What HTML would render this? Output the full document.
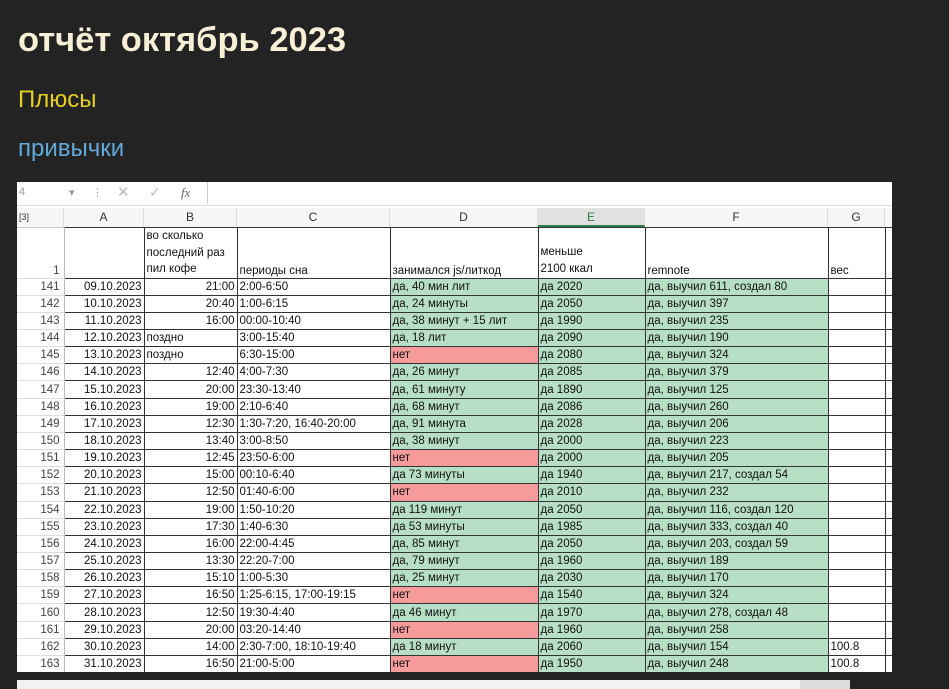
<!DOCTYPE html>
<html><head><meta charset="utf-8"><style>
body{margin:0;background:#232323;width:949px;height:689px;overflow:hidden;position:relative;font-family:"Liberation Sans","DejaVu Sans",sans-serif}
h1{position:absolute;left:18px;top:21px;margin:0;font-size:34.5px;font-weight:bold;color:#f7efd6}
.h2{position:absolute;left:18px;margin:0;font-size:24px}
#sheet{position:absolute;left:17px;top:182px;width:875px;height:490px;background:#fff;overflow:hidden}
#tb{position:absolute;left:0;top:0;width:875px;height:23px;background:#fff;border-bottom:1px solid #ddd;font-size:11px;color:#999}
#hd{position:absolute;left:0;top:26px;height:19px;width:875px;background:#f6f6f6;border-bottom:1px solid #ccc}
.ch{position:absolute;top:0;height:19px;line-height:19px;text-align:center;font-size:12px;color:#333;border-right:1px solid #ddd;box-sizing:border-box}
table{position:absolute;left:0;top:45px;width:888px;border-collapse:collapse;table-layout:fixed;font-size:11.5px;color:#111}
tr{height:17.17px}
td{border:1px solid #333;padding:0 2px;white-space:nowrap;overflow:hidden;line-height:14px}
td.n{text-align:right;color:#444;border:none;border-right:1px solid #bbb;border-bottom:1px solid #ddd;padding-right:4px}
td.r{text-align:right}
.g{background:#b7dfc5}.x{background:#f59b9b}
</style></head><body>
<h1>отчёт октябрь 2023</h1>
<div class="h2" style="top:86px;color:#e6cf22">Плюсы</div>
<div class="h2" style="top:135px;color:#62a9d9">привычки</div>
<div id="sheet">
<div id="tb"><span style="position:absolute;left:2px;top:4px">4</span><span style="position:absolute;left:52px;top:4px">▾</span><span style="position:absolute;left:75px;top:4px">⋮</span><span style="position:absolute;left:100px;top:1px;font-size:15px;color:#bbb">✕</span><span style="position:absolute;left:132px;top:2px;font-size:14px;color:#bbb">✓</span><span style="position:absolute;left:164px;top:3px;font-style:italic;color:#666;font-family:'Liberation Serif',serif;font-size:13px">fx</span><div style="position:absolute;left:190px;top:0;width:1px;height:22px;background:#ccc"></div></div>
<div id="hd">
<div class="ch" style="left:0;width:47px;text-align:left;padding-left:2px;font-size:9px">[3]</div>
<div class="ch" style="left:47px;width:80px">A</div>
<div class="ch" style="left:127px;width:93px">B</div>
<div class="ch" style="left:220px;width:153px">C</div>
<div class="ch" style="left:373px;width:148px">D</div>
<div class="ch" style="left:521px;width:107px;background:#e1e1e1;border-bottom:2px solid #2e7d4f;color:#2e7d4f">E</div>
<div class="ch" style="left:628px;width:183px">F</div>
<div class="ch" style="left:811px;width:57px">G</div>
</div>
<table>
<colgroup><col style="width:47px"><col style="width:80px"><col style="width:93px"><col style="width:153px"><col style="width:148px"><col style="width:107px"><col style="width:183px"><col style="width:57px"><col style="width:20px"></colgroup>
<tr style="height:48px"><td class="n" style="vertical-align:bottom">1</td><td></td><td style="vertical-align:bottom;line-height:16.5px;border-bottom:1px solid #333">во сколько<br>последний раз<br>пил кофе</td><td style="vertical-align:bottom">периоды сна</td><td style="vertical-align:bottom">занимался js/литкод</td><td style="vertical-align:bottom;line-height:17px">меньше<br>2100 ккал</td><td style="vertical-align:bottom">remnote</td><td style="vertical-align:bottom">вес</td><td></td></tr>
<tr><td class="n">141</td><td class="r">09.10.2023</td><td class="r">21:00</td><td>2:00-6:50</td><td class="g">да, 40 мин лит</td><td class="g">да 2020</td><td class="g">да, выучил 611, создал 80</td><td></td><td></td></tr>
<tr><td class="n">142</td><td class="r">10.10.2023</td><td class="r">20:40</td><td>1:00-6:15</td><td class="g">да, 24 минуты</td><td class="g">да 2050</td><td class="g">да, выучил 397</td><td></td><td></td></tr>
<tr><td class="n">143</td><td class="r">11.10.2023</td><td class="r">16:00</td><td>00:00-10:40</td><td class="g">да, 38 минут + 15 лит</td><td class="g">да 1990</td><td class="g">да, выучил 235</td><td></td><td></td></tr>
<tr><td class="n">144</td><td class="r">12.10.2023</td><td>поздно</td><td>3:00-15:40</td><td class="g">да, 18 лит</td><td class="g">да 2090</td><td class="g">да, выучил 190</td><td></td><td></td></tr>
<tr><td class="n">145</td><td class="r">13.10.2023</td><td>поздно</td><td>6:30-15:00</td><td class="x">нет</td><td class="g">да 2080</td><td class="g">да, выучил 324</td><td></td><td></td></tr>
<tr><td class="n">146</td><td class="r">14.10.2023</td><td class="r">12:40</td><td>4:00-7:30</td><td class="g">да, 26 минут</td><td class="g">да 2085</td><td class="g">да, выучил 379</td><td></td><td></td></tr>
<tr><td class="n">147</td><td class="r">15.10.2023</td><td class="r">20:00</td><td>23:30-13:40</td><td class="g">да, 61 минуту</td><td class="g">да 1890</td><td class="g">да, выучил 125</td><td></td><td></td></tr>
<tr><td class="n">148</td><td class="r">16.10.2023</td><td class="r">19:00</td><td>2:10-6:40</td><td class="g">да, 68 минут</td><td class="g">да 2086</td><td class="g">да, выучил 260</td><td></td><td></td></tr>
<tr><td class="n">149</td><td class="r">17.10.2023</td><td class="r">12:30</td><td>1:30-7:20, 16:40-20:00</td><td class="g">да, 91 минута</td><td class="g">да 2028</td><td class="g">да, выучил 206</td><td></td><td></td></tr>
<tr><td class="n">150</td><td class="r">18.10.2023</td><td class="r">13:40</td><td>3:00-8:50</td><td class="g">да, 38 минут</td><td class="g">да 2000</td><td class="g">да, выучил 223</td><td></td><td></td></tr>
<tr><td class="n">151</td><td class="r">19.10.2023</td><td class="r">12:45</td><td>23:50-6:00</td><td class="x">нет</td><td class="g">да 2000</td><td class="g">да, выучил 205</td><td></td><td></td></tr>
<tr><td class="n">152</td><td class="r">20.10.2023</td><td class="r">15:00</td><td>00:10-6:40</td><td class="g">да 73 минуты</td><td class="g">да 1940</td><td class="g">да, выучил 217, создал 54</td><td></td><td></td></tr>
<tr><td class="n">153</td><td class="r">21.10.2023</td><td class="r">12:50</td><td>01:40-6:00</td><td class="x">нет</td><td class="g">да 2010</td><td class="g">да, выучил 232</td><td></td><td></td></tr>
<tr><td class="n">154</td><td class="r">22.10.2023</td><td class="r">19:00</td><td>1:50-10:20</td><td class="g">да 119 минут</td><td class="g">да 2050</td><td class="g">да, выучил 116, создал 120</td><td></td><td></td></tr>
<tr><td class="n">155</td><td class="r">23.10.2023</td><td class="r">17:30</td><td>1:40-6:30</td><td class="g">да 53 минуты</td><td class="g">да 1985</td><td class="g">да, выучил 333, создал 40</td><td></td><td></td></tr>
<tr><td class="n">156</td><td class="r">24.10.2023</td><td class="r">16:00</td><td>22:00-4:45</td><td class="g">да, 85 минут</td><td class="g">да 2050</td><td class="g">да, выучил 203, создал 59</td><td></td><td></td></tr>
<tr><td class="n">157</td><td class="r">25.10.2023</td><td class="r">13:30</td><td>22:20-7:00</td><td class="g">да, 79 минут</td><td class="g">да 1960</td><td class="g">да, выучил 189</td><td></td><td></td></tr>
<tr><td class="n">158</td><td class="r">26.10.2023</td><td class="r">15:10</td><td>1:00-5:30</td><td class="g">да, 25 минут</td><td class="g">да 2030</td><td class="g">да, выучил 170</td><td></td><td></td></tr>
<tr><td class="n">159</td><td class="r">27.10.2023</td><td class="r">16:50</td><td>1:25-6:15, 17:00-19:15</td><td class="x">нет</td><td class="g">да 1540</td><td class="g">да, выучил 324</td><td></td><td></td></tr>
<tr><td class="n">160</td><td class="r">28.10.2023</td><td class="r">12:50</td><td>19:30-4:40</td><td class="g">да 46 минут</td><td class="g">да 1970</td><td class="g">да, выучил 278, создал 48</td><td></td><td></td></tr>
<tr><td class="n">161</td><td class="r">29.10.2023</td><td class="r">20:00</td><td>03:20-14:40</td><td class="x">нет</td><td class="g">да 1960</td><td class="g">да, выучил 258</td><td></td><td></td></tr>
<tr><td class="n">162</td><td class="r">30.10.2023</td><td class="r">14:00</td><td>2:30-7:00, 18:10-19:40</td><td class="g">да 18 минут</td><td class="g">да 2060</td><td class="g">да, выучил 154</td><td>100.8</td><td></td></tr>
<tr><td class="n">163</td><td class="r">31.10.2023</td><td class="r">16:50</td><td>21:00-5:00</td><td class="x">нет</td><td class="g">да 1950</td><td class="g">да, выучил 248</td><td>100.8</td><td></td></tr>
<tr><td class="n"></td><td></td><td></td><td></td><td></td><td></td><td></td><td></td><td></td></tr>
</table>
</div>
<div style="position:absolute;left:17px;top:680px;width:833px;height:9px;background:#f2f2f2"></div>
<div style="position:absolute;left:800px;top:680px;width:50px;height:9px;background:#ddd"></div>
</body></html>
